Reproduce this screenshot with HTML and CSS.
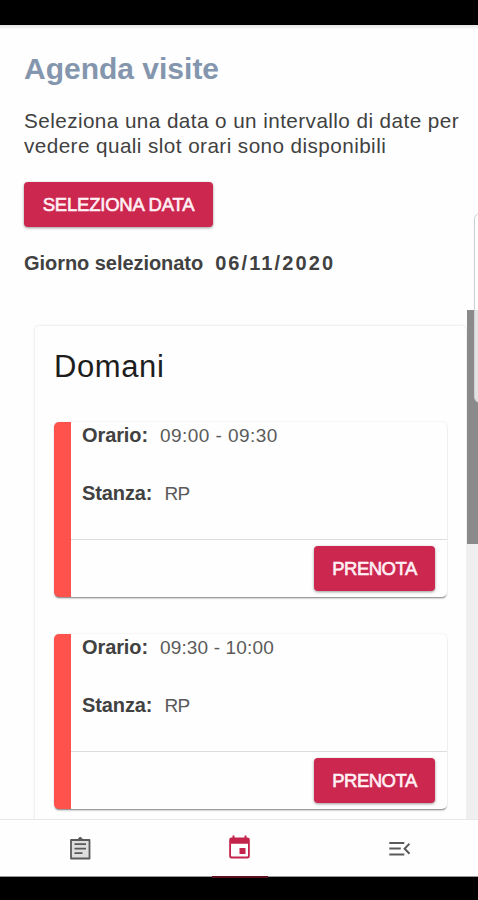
FILE: index.html
```html
<!DOCTYPE html>
<html lang="it">
<head>
<meta charset="utf-8">
<meta name="viewport" content="width=device-width">
<title>Agenda visite</title>
<link rel="stylesheet" href="styles.css">
</head>
<body>
<div class="phone">
  <main class="screen">
    <h1 class="title">Agenda visite</h1>
    <p class="intro">Seleziona una data o un intervallo di date per vedere quali slot orari sono disponibili</p>
    <button class="btn btn-date">SELEZIONA DATA</button>
    <p class="selected"><span>Giorno selezionato</span><span class="selected-date">06/11/2020</span></p>
    <section class="day">
      <h2 class="day-title">Domani</h2>
      <article class="slot">
        <div class="slot-info">
          <p class="row"><b class="label-time">Orario:</b><span class="time">09:00 - 09:30</span></p>
          <p class="row"><b class="label-room">Stanza:</b><span class="room">RP</span></p>
        </div>
        <div class="slot-actions"><button class="btn btn-book">PRENOTA</button></div>
      </article>
      <article class="slot">
        <div class="slot-info">
          <p class="row"><b class="label-time">Orario:</b><span class="time time-narrow">09:30 - 10:00</span></p>
          <p class="row"><b class="label-room">Stanza:</b><span class="room">RP</span></p>
        </div>
        <div class="slot-actions"><button class="btn btn-book">PRENOTA</button></div>
      </article>
    </section>
    <div class="scrollbar"><div class="thumb"></div></div>
    <div class="edge-handle"></div>
  </main>
  <nav class="tabs">
    <a class="tab">
      <svg viewBox="0 0 24 26" width="24" height="26">
        <path d="M3 5h18.500v18.500H3z" fill="#dedede" stroke="#5a5a5a" stroke-width="1.800" stroke-linejoin="round"/>
        <path d="M9 5 10.800 3.500a1.500 1.500 0 0 1 2.900 0l1.800 1.500z" fill="#5a5a5a" stroke="#5a5a5a"/>
        <path d="M6.500 9.200h11.500M6.500 13.700h11.500M6.500 18.200h8" stroke="#5a5a5a" stroke-width="1.700"/>
      </svg>
    </a>
    <a class="tab active">
      <svg viewBox="0 0 24 26" width="24" height="26">
        <path fill-rule="evenodd" fill="#c4244b" d="M5.500 .5h2v2h10v-2h2v2h1a2.300 2.300 0 0 1 2.300 2.300v16.400a2.300 2.300 0 0 1-2.300 2.300h-16a2.300 2.300 0 0 1-2.300-2.300V4.800a2.300 2.300 0 0 1 2.300-2.300h1zM4 8.700v12.100a.8.8 0 0 0 .8.800h15.400a.8.8 0 0 0 .8-.8V8.700z"/>
        <path fill="#c4244b" d="M12.500 13h6v6h-6z"/>
      </svg>
    </a>
    <a class="tab">
      <svg viewBox="0 0 24 26" width="24" height="26" fill="none" stroke="#5a5a5a" stroke-width="2">
        <path d="M3.300 8h15M3.300 13.500h11.500M3.300 19.500h15"/>
        <path d="m23.500 8.700-4.900 5 4.900 5"/>
      </svg>
    </a>
  </nav>
</div>
</body>
</html>
```
FILE: styles.css
```css
* { box-sizing: border-box; }

body {
  margin: 0;
  background: #000;
  font-family: "Liberation Sans", Arial, sans-serif;
}

h1, h2, p { margin: 0; }

.phone {
  width: 478px;
  height: 900px;
  padding: 25px 0 23px;
  display: flex;
  flex-direction: column;
  background: #000;
  overflow: hidden;
}

.screen {
  position: relative;
  height: 794px;
  padding: 0 11px 0 24px;
  overflow: hidden;
  background: linear-gradient(#e4e4e4, #fefefe 5px);
  color: #414141;
}

.title {
  padding-top: 26px;
  font-size: 30px;
  line-height: 36px;
  color: #8496ad;
}

.intro {
  margin-top: 21px;
  font-size: 20.7px;
  line-height: 25px;
  letter-spacing: 0.43px;
}

.btn {
  display: block;
  height: 45px;
  padding: 0;
  border: 0;
  border-radius: 4px;
  background: #cc274f;
  color: #fff0f4;
  font-family: inherit;
  font-weight: 400;
  font-size: 18.5px;
  line-height: 45px;
  letter-spacing: -0.2px;
  -webkit-text-stroke: 0.6px #fff0f4;
  text-align: center;
  box-shadow: 0 1px 3px rgba(0, 0, 0, 0.4);
}

.btn-date { width: 189px; margin-top: 24px; }
.btn-book { width: 121px; letter-spacing: -0.5px; }

.selected {
  display: flex;
  gap: 12px;
  margin-top: 24px;
  font-size: 20px;
  line-height: 25px;
  font-weight: 700;
  letter-spacing: -0.05px;
}

.selected-date { letter-spacing: 2.1px; }

.day {
  width: 431px;
  height: 520px;
  margin: 50px 0 0 11px;
  padding: 21px 19px 0;
  border-radius: 4px;
  background: #fefefe;
  box-shadow: 0 0 3px rgba(0, 0, 0, 0.15);
}

.day-title {
  font-size: 31px;
  line-height: 40px;
  font-weight: 400;
  letter-spacing: 0.6px;
  color: #1d1d1d;
}

.slot {
  height: 175px;
  margin-top: 37px;
  border-left: 17px solid #ff524d;
  border-radius: 5px;
  background: #fefefe;
  box-shadow: 0 2px 2px -1px rgba(0, 0, 0, 0.5), 0 0 2px rgba(0, 0, 0, 0.12);
}

.day-title + .slot { margin-top: 35px; }

.slot-info { height: 118px; padding-left: 11px; border-bottom: 1px solid #dcdcdc; }
.row { display: flex; align-items: baseline; gap: 12px; height: 58px; line-height: 27px; }
.row b { font-size: 20px; letter-spacing: -0.1px; }
.row span { font-size: 19px; color: #5a5a5a; }
.row .time { letter-spacing: 0.45px; }
.row .time-narrow { letter-spacing: 0.15px; }
.row .room { letter-spacing: -0.7px; }

.slot-actions {
  display: flex;
  justify-content: flex-end;
  padding: 6px 12px 0 0;
}

.scrollbar {
  position: absolute;
  top: 285px;
  right: 0;
  width: 11px;
  height: 509px;
  background: #efefef;
}

.thumb { height: 234px; background: #8a8a8a; }

.edge-handle {
  position: absolute;
  top: 188px;
  right: -10px;
  width: 14px;
  height: 190px;
  border: 1px solid #cfcfcf;
  border-radius: 6px;
  background: linear-gradient(#fdfdfd 96px, #e2e2e2 96px);
}

.tabs {
  display: grid;
  grid-template-columns: repeat(3, 1fr);
  height: 58px;
  border-top: 1px solid #e8e8e8;
  border-bottom: 1px solid #999;
  background: #fefefe;
}

.tab { position: relative; display: flex; align-items: center; justify-content: center; }
.tab.active::after {
  content: "";
  position: absolute;
  bottom: -2px;
  left: 53px;
  width: 56px;
  height: 2px;
  background: #5c0d1e;
}
```
